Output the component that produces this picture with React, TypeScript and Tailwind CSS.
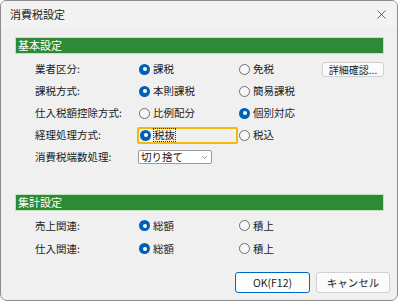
import { X, ChevronDown } from 'lucide-react';

const font = { fontFamily: '"Noto Sans CJK JP", "Noto Sans", sans-serif' };

function Radio({ checked, label, focus }: { checked?: boolean; label: string; focus?: boolean }) {
  return (
    <div className="flex items-center gap-[3px]">
      {checked ? (
        <span className="w-[11px] h-[11px] rounded-full bg-[#005fb8] flex items-center justify-center shrink-0">
          <span className="w-[4px] h-[4px] rounded-full bg-white" />
        </span>
      ) : (
        <span className="w-[11px] h-[11px] rounded-full border border-[#6f6f6f] bg-[#f7f7f7] shrink-0" />
      )}
      <span className={focus ? 'outline outline-1 outline-dotted outline-[#333] leading-[12px]' : ''}>{label}</span>
    </div>
  );
}

function Header({ title }: { title: string }) {
  return (
    <div className="h-[17px] w-[369px] bg-[#2f8a35] border border-[#bfe3b8] text-white flex items-center pl-[2px] text-[11px]">
      {title}
    </div>
  );
}

function Row({ label, children, h = 'h-[22px]' }: { label: string; children: React.ReactNode; h?: string }) {
  return (
    <div className={`flex items-center ${h}`}>
      <div className="w-[123px] pl-[20px] shrink-0 whitespace-nowrap">{label}</div>
      {children}
    </div>
  );
}

export default function App() {
  return (
    <div className="w-[400px] h-[303px] bg-white" style={font}>
      <div className="w-[398px] h-[301px] bg-[#f0f0f0] border border-[#8c8c8c] rounded-b-[7px] rounded-t-[6px] flex flex-col text-[10.5px] text-[#1b1b1b] overflow-hidden">
        <div className="h-[26px] flex items-center justify-between pl-[9px] pr-[8px] bg-[#f3f3f3]">
          <span className="text-[11px]">消費税設定</span>
          <X className="w-[15px] h-[15px] text-[#222]" strokeWidth={1.1} />
        </div>
        <div className="pl-[14px] flex flex-col">
          <div className="mt-[10px]">
            <Header title="基本設定" />
          </div>
          <div className="mt-[4px] flex flex-col">
            <Row label="業者区分:">
              <div className="w-[101px] pl-[1px]"><Radio checked label="課税" /></div>
              <div className="w-[83px]"><Radio label="免税" /></div>
              <div className="w-[62px] h-[15px] border border-[#cfcfcf] rounded-[3px] bg-[#fbfbfb] flex items-center justify-center text-[10px]">
                詳細確認...
              </div>
            </Row>
            <Row label="課税方式:">
              <div className="w-[101px] pl-[1px]"><Radio checked label="本則課税" /></div>
              <Radio label="簡易課税" />
            </Row>
            <Row label="仕入税額控除方式:">
              <div className="w-[101px] pl-[1px]"><Radio label="比例配分" /></div>
              <Radio checked label="個別対応" />
            </Row>
            <Row label="経理処理方式:">
              <div className="w-[101px] h-[17px] -ml-[1px] mr-[1px] rounded-[2px] flex items-center pl-[1px] border-2 border-[#f2b90f]">
                <Radio checked label="税抜" focus />
              </div>
              <Radio label="税込" />
            </Row>
            <Row label="消費税端数処理:">
              <div className="w-[74px] h-[14px] border border-[#9a9a9a] rounded-[2px] bg-white flex items-center justify-between pl-[2px] pr-[2px]">
                <span>切り捨て</span>
                <ChevronDown className="w-[9px] h-[9px] text-[#444]" strokeWidth={1.5} />
              </div>
            </Row>
          </div>
          <div className="mt-[26px]">
            <Header title="集計設定" />
          </div>
          <div className="mt-[3px] flex flex-col">
            <Row label="売上関連:" h="h-[23px]">
              <div className="w-[101px] pl-[1px]"><Radio checked label="総額" /></div>
              <Radio label="積上" />
            </Row>
            <Row label="仕入関連:" h="h-[23px]">
              <div className="w-[101px] pl-[1px]"><Radio checked label="総額" /></div>
              <Radio label="積上" />
            </Row>
          </div>
          <div className="mt-[12px] flex justify-end gap-[6px] pr-[7px]">
            <div className="w-[75px] h-[21px] border border-[#0067c0] rounded-[3px] bg-[#fdfdfd] flex items-center justify-center text-[10.5px]">
              OK(F12)
            </div>
            <div className="w-[74px] h-[21px] border border-[#d0d0d0] rounded-[3px] bg-[#fbfbfb] flex items-center justify-center text-[10.5px]">
              キャンセル
            </div>
          </div>
        </div>
      </div>
    </div>
  );
}
